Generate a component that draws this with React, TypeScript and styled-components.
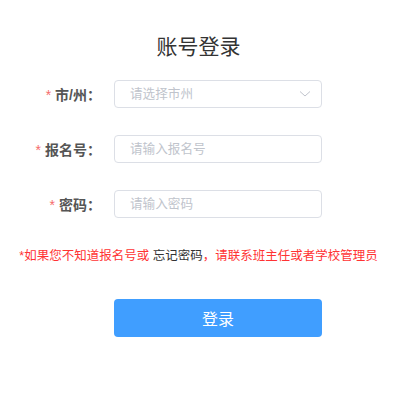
import React, { useState } from 'react';
import styled, { createGlobalStyle } from 'styled-components';

const Global = createGlobalStyle`
  body {
    margin: 0;
    background: #fff;
    font-family: "Liberation Sans", "Noto Sans CJK SC", sans-serif;
  }
`;

const Page = styled.div`
  width: 397px;
  padding-top: 34px;
`;

const Title = styled.h2`
  margin: 0 0 20px;
  text-align: center;
  font-size: 21px;
  font-weight: 400;
  line-height: 26px;
  color: #333;
`;

const Form = styled.form`
  display: flex;
  flex-direction: column;
  gap: 27px;
  padding-left: 14px;
`;

const Row = styled.div`
  display: flex;
  align-items: center;
  height: 28px;
`;

const Label = styled.label`
  width: 100px;
  box-sizing: border-box;
  padding-right: 13px;
  text-align: right;
  font-size: 14px;
  font-weight: 700;
  color: #555;

  &::before {
    content: '*';
    color: #f56c6c;
    font-weight: 400;
    margin-right: 4px;
  }
`;

const Field = styled.div`
  position: relative;
  width: 208px;
  height: 28px;
`;

const Input = styled.input`
  width: 100%;
  height: 100%;
  box-sizing: border-box;
  border: 1px solid #dcdfe6;
  border-radius: 4px;
  padding: 0 15px;
  outline: none;
  font-family: inherit;
  font-size: 12.6px;
  color: #606266;
  background: #fff;

  &::placeholder {
    color: #c0c4cc;
  }
`;

const Arrow = styled.svg`
  position: absolute;
  right: 11px;
  top: 11px;
  pointer-events: none;
`;

const Note = styled.p`
  margin: 29px 0 0;
  text-align: center;
  font-size: 12.5px;
  line-height: 18px;
  color: #ff3333;

  span {
    color: #333;
  }
`;

const ButtonRow = styled.div`
  padding: 34px 0 0 114px;
`;

const Button = styled.button`
  width: 208px;
  height: 38px;
  border: none;
  border-radius: 4px;
  background: #409eff;
  color: #fff;
  font-family: inherit;
  font-size: 16px;
  cursor: pointer;
`;

const App = () => {
  const [no, setNo] = useState('');
  const [pw, setPw] = useState('');

  return (
    <Page>
      <Global />
      <Title>账号登录</Title>
      <Form onSubmit={e => e.preventDefault()}>
        <Row>
          <Label>市/州：</Label>
          <Field>
            <Input readOnly placeholder="请选择市州" />
            <Arrow width="12" height="6" viewBox="0 0 12 6">
              <path d="M1 0.5 L6 5 L11 0.5" fill="none" stroke="#c0c4cc" strokeWidth="1" />
            </Arrow>
          </Field>
        </Row>
        <Row>
          <Label>报名号：</Label>
          <Field>
            <Input placeholder="请输入报名号" value={no} onChange={e => setNo(e.target.value)} />
          </Field>
        </Row>
        <Row>
          <Label>密码：</Label>
          <Field>
            <Input type="password" placeholder="请输入密码" value={pw} onChange={e => setPw(e.target.value)} />
          </Field>
        </Row>
      </Form>
      <Note>
        *如果您不知道报名号或 <span>忘记密码</span>，请联系班主任或者学校管理员
      </Note>
      <ButtonRow>
        <Button type="button">登录</Button>
      </ButtonRow>
    </Page>
  );
};

export default App;
